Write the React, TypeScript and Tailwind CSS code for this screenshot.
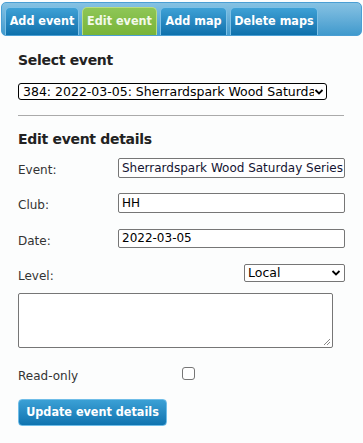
import React from "react";

const tabs = [
  { label: "Add event", active: false, w: "w-[74px]" },
  { label: "Edit event", active: true, w: "w-[75px]" },
  { label: "Add map", active: false, w: "w-[67px]" },
  { label: "Delete maps", active: false, w: "w-[88px]" },
];

function Arrow() {
  return (
    <svg width="10" height="8" viewBox="0 0 10 8" className="shrink-0">
      <path d="M1.5 2 L5 5.5 L8.5 2" stroke="black" strokeWidth="1.8" fill="none" />
    </svg>
  );
}

function Row({ label, cls, children }: { label: string; cls: string; children: React.ReactNode }) {
  return (
    <div className={`flex items-start ${cls}`}>
      <div className="w-[99px] shrink-0 mt-[4px] text-[12px] text-[#333] leading-[16px]">{label}</div>
      <div className="flex-1 flex justify-end">{children}</div>
    </div>
  );
}

export default function App() {
  return (
    <div className="w-[363px] h-[443px] bg-[#fcfdfd] overflow-hidden" style={{ fontFamily: "'DejaVu Sans', Verdana, sans-serif" }}>
      <div className="pt-[2px] px-[1px]">
        <div className="h-[34px] rounded-[5px] border border-[#4a9fd4] bg-gradient-to-b from-[#86c2e3] to-[#3f9acd] flex items-end gap-[3px] pl-[3px]">
          {tabs.map((t) => (
            <div
              key={t.label}
              className={
                t.active
                  ? `${t.w} h-[28px] rounded-t-[5px] border border-b-0 border-[#b9dc80] bg-gradient-to-b from-[#8ec656] to-[#78b438] text-[#f3f9ea] text-[12.5px] font-bold font-stretch-condensed flex items-center justify-center whitespace-nowrap`
                  : `${t.w} h-[28px] rounded-t-[5px] border border-b-0 border-[#7cc0e6] bg-gradient-to-b from-[#3ea1d6] to-[#0d71ac] text-white text-[12.5px] font-bold font-stretch-condensed flex items-center justify-center whitespace-nowrap`
              }
            >
              {t.label}
            </div>
          ))}
        </div>
      </div>

      <div className="pl-[18px] pr-[18px]">
        <div className="mt-[15px] text-[14px] font-bold text-[#222] leading-[18px] tracking-[-0.3px]">Select event</div>
        <div className="mt-[14px]">
          <div className="w-[309px] h-[17px] border-[1.5px] border-black rounded-[3px] bg-white flex items-center justify-between pl-[4px] pr-[2px] overflow-hidden">
            <span className="text-[12.5px] text-black whitespace-nowrap overflow-hidden leading-[14px]">384: 2022-03-05: Sherrardspark Wood Saturda</span>
            <Arrow />
          </div>
        </div>
        <div className="mt-[15px] h-px bg-[#aaa] w-[326px]" />
        <div className="mt-[14px] text-[14px] font-bold text-[#222] leading-[18px] tracking-[-0.3px]">Edit event details</div>

        <div className="mt-[10px] flex flex-col">
          <Row label="Event:" cls="h-[20px]">
            <div className="w-[227px] h-[20px] border border-[#767676] rounded-[2px] bg-white pl-[3px] text-[12px] text-[#141432] leading-[18px] whitespace-nowrap overflow-hidden">Sherrardspark Wood Saturday Series</div>
          </Row>
          <Row label="Club:" cls="h-[20px] mt-[15px]">
            <div className="w-[227px] h-[20px] border border-[#767676] rounded-[2px] bg-white pl-[3px] text-[12px] text-black leading-[18px] whitespace-nowrap overflow-hidden">HH</div>
          </Row>
          <Row label="Date:" cls="h-[19px] mt-[16px]">
            <div className="w-[227px] h-[19px] border border-[#767676] rounded-[2px] bg-white pl-[3px] text-[12px] text-black leading-[17px] whitespace-nowrap overflow-hidden">2022-03-05</div>
          </Row>
          <Row label="Level:" cls="h-[18px] mt-[16px]">
            <div className="w-[101px] h-[18px] border border-[#767676] rounded-[2px] bg-white flex items-center justify-between pl-[3px] pr-[3px]">
              <span className="text-[12.5px] text-black leading-[16px]">Local</span>
              <Arrow />
            </div>
          </Row>
        </div>

        <div className="mt-[11px] relative w-[315px] h-[55px] border border-[#767676] rounded-[2px] bg-white">
          <svg width="9" height="9" viewBox="0 0 9 9" className="absolute right-[1px] bottom-[1px]">
            <path d="M8 2 L2 8 M8 5 L5 8" stroke="#888" strokeWidth="1" />
          </svg>
        </div>

        <div className="mt-[19px] flex items-start h-[13px]">
          <div className="w-[164px] mt-[1px] text-[12px] text-[#333] leading-[16px]">Read-only</div>
          <div className="w-[13px] h-[13px] border border-[#767676] rounded-[3px] bg-white" />
        </div>

        <div className="mt-[19px]">
          <div className="w-[149px] h-[27px] rounded-[4px] border border-[#6fbde8] bg-gradient-to-b from-[#3aa0d5] to-[#0f74b0] text-white font-bold font-stretch-condensed text-[12.5px] flex items-center justify-center whitespace-nowrap">
            Update event details
          </div>
        </div>
      </div>
    </div>
  );
}
